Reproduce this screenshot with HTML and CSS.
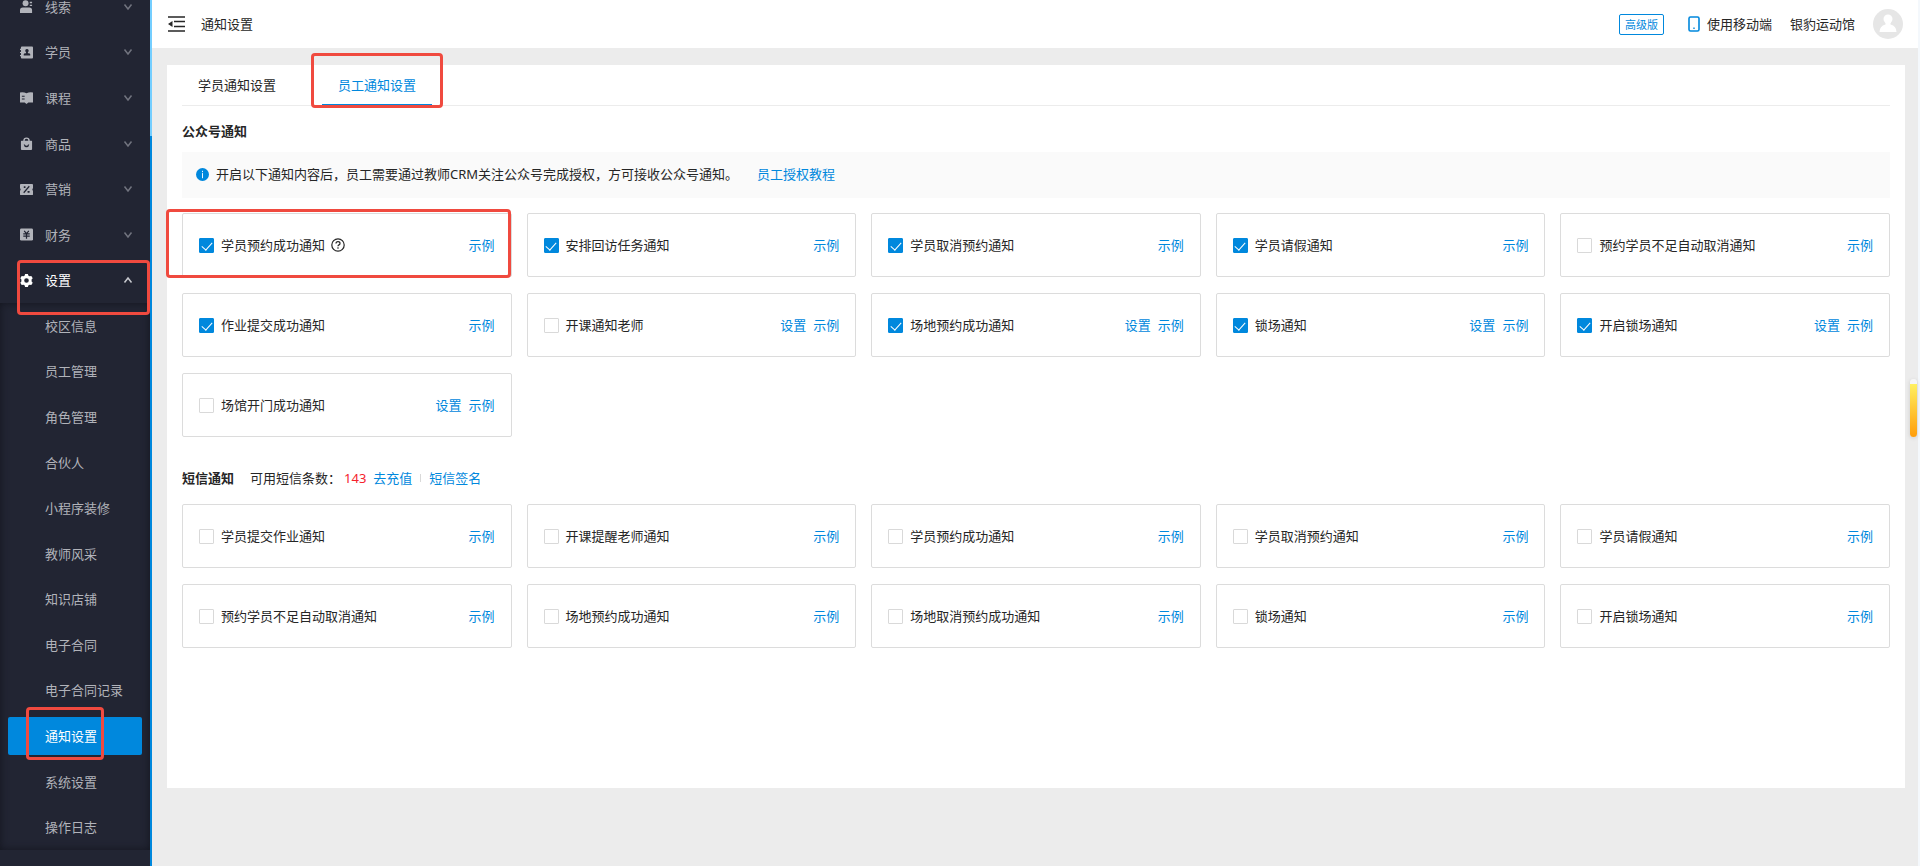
FILE: index.html
```html
<!DOCTYPE html>
<html lang="zh-CN">
<head>
<meta charset="utf-8">
<title>通知设置</title>
<link rel="stylesheet" href="styles.css">
</head>
<body>
<svg class="sprite" aria-hidden="true">
  <symbol id="down" viewBox="0 0 10 10"><path d="M1.5 2.5 5 7l3.500-4.500" fill="none" stroke="currentColor" stroke-width="1.500"/></symbol>
  <symbol id="up" viewBox="0 0 10 10"><path d="M1.500 7.500 5 3l3.500 4.500" fill="none" stroke="currentColor" stroke-width="1.500"/></symbol>
</svg>
<div class="app">
  <aside class="sidebar">
    <nav class="menu">
      <a class="item" href="#"><svg class="icon" viewBox="0 0 14 14"><circle cx="6" cy="3.500" r="3.200"/><path d="M0 14v-3q0-3 3-3h7q3 0 3 3v3zM10.500 2H13v1.500h-2.500zM10.500 5H13v1.500h-2.500z"/></svg><span>线索</span><svg class="arrow"><use href="#down"/></svg></a>
      <a class="item" href="#"><svg class="icon" viewBox="0 0 14 14"><path fill-rule="evenodd" d="M2 .5h11q1 0 1 1v11q0 1-1 1H2q-1 0-1-1V11H0V9.800h1V7.600H0V6.400h1V4.200H0V3h1V1.500q0-1 1-1zM7.500 3.200a1.900 1.900 0 0 0-1 3.500v1H6q-2 0-2 1.300v1.200h7V9q0-1.300-2-1.300h-.5v-1a1.900 1.900 0 0 0-1-3.500z"/></svg><span>学员</span><svg class="arrow"><use href="#down"/></svg></a>
      <a class="item" href="#"><svg class="icon" viewBox="0 0 14 14"><path fill-rule="evenodd" d="M0 1.500q4-.8 7 1 3-1.800 7-1v11H9L7 14l-2-1.500H0zM2 5v1.200h3V5zm0 3v1.200h3V8z"/></svg><span>课程</span><svg class="arrow"><use href="#down"/></svg></a>
      <a class="item" href="#"><svg class="icon" viewBox="0 0 14 14"><path fill-rule="evenodd" d="M1.500 4h2a3.500 3.500 0 0 1 7 0h2q.5 0 .5.500V13q0 1-1 1H2q-1 0-1-1V4.500q0-.5.500-.5zM5 4h4a2 2 0 0 0-4 0zM4 8q.5 3 3 3t3-3H8.700Q8.300 9.500 7 9.500T5.300 8z"/></svg><span>商品</span><svg class="arrow"><use href="#down"/></svg></a>
      <a class="item" href="#"><svg class="icon" viewBox="0 0 14 14"><path d="M1 1h12q1 0 1 1v3.500q-1.500 1.500 0 3V12q0 1-1 1H1q-1 0-1-1V8.500q1.500-1.500 0-3V2q0-1 1-1z"/><path class="cut" d="M10 3.500 4 10.500M4 4.500h2M5 3.500v2M8 9.500h2.500M9.200 8.500v2"/></svg><span>营销</span><svg class="arrow"><use href="#down"/></svg></a>
      <a class="item" href="#"><svg class="icon" viewBox="0 0 14 14"><rect y=".5" width="14" height="13" rx="1.500"/><path class="cut" d="m4.500 3 2.500 3 2.500-3M3.500 6.300h7M3.500 8.800h7M7 6v5.500"/></svg><span>财务</span><svg class="arrow"><use href="#down"/></svg></a>
      <a class="item open" href="#"><svg class="icon" viewBox="0 0 14 14"><path fill-rule="evenodd" d="M5.500 0h3l.6 1.800 1.200.7 1.900-.4 1.500 2.600L12.500 6v2l1.200 1.300-1.500 2.600-1.900-.4-1.200.7-.6 1.800h-3l-.6-1.800-1.200-.7-1.900.4L.3 9.300 1.500 8V6L.3 4.700l1.500-2.600 1.900.4 1.200-.7zM7 4.500a2.500 2.500 0 1 0 0 5 2.500 2.500 0 0 0 0-5z"/></svg><span>设置</span><svg class="arrow"><use href="#up"/></svg><i class="mark mark-menu"></i></a>
      <div class="submenu">
        <a class="sub" href="#">校区信息</a>
        <a class="sub" href="#">员工管理</a>
        <a class="sub" href="#">角色管理</a>
        <a class="sub" href="#">合伙人</a>
        <a class="sub" href="#">小程序装修</a>
        <a class="sub" href="#">教师风采</a>
        <a class="sub" href="#">知识店铺</a>
        <a class="sub" href="#">电子合同</a>
        <a class="sub" href="#">电子合同记录</a>
        <a class="sub" href="#"><span class="current">通知设置</span><i class="mark mark-sub"></i></a>
        <a class="sub" href="#">系统设置</a>
        <a class="sub" href="#">操作日志</a>
      </div>
    </nav>
  </aside>
  <div class="page">
    <header class="topbar">
      <button class="fold" aria-label="收起菜单"><svg viewBox="0 0 17 16"><path d="M0 1h17M6 5.500h11M6 10.500h11M0 15h17" fill="none" stroke="currentColor" stroke-width="1.500"/><path d="M4.500 5v6L0 8z" fill="currentColor"/></svg></button>
      <h1 class="title">通知设置</h1>
      <span class="badge">高级版</span>
      <a class="mobile" href="#"><svg viewBox="0 0 12 16"><rect x="1" y="1" width="10" height="14" rx="1.500" fill="none" stroke="#0088dd" stroke-width="1.600"/><path d="M5.300 11.500h1.400V13H5.300z" fill="#0088dd"/></svg>使用移动端</a>
      <span class="venue">银豹运动馆</span>
      <svg class="avatar" viewBox="0 0 30 30"><circle cx="15" cy="15" r="15" fill="#e6e6e6"/><circle cx="15" cy="10" r="4.500" fill="#fff"/><path d="M12.500 13h5v2.500q6 1.500 6 7.500h-17q0-6 6-7.500z" fill="#fff"/></svg>
    </header>
    <main class="panel">
      <nav class="tabs">
        <a class="tab" href="#">学员通知设置</a>
        <a class="tab selected" href="#">员工通知设置<i class="mark mark-tab"></i></a>
      </nav>
      <h2 class="heading">公众号通知</h2>
      <p class="notice"><svg viewBox="0 0 14 14"><circle cx="7" cy="7" r="7" fill="#0088dd"/><path d="M7 3v1.500M7 5.500V11" stroke="#fff"/></svg><span>开启以下通知内容后，员工需要通过教师CRM关注公众号完成授权，方可接收公众号通知。</span><a href="#">员工授权教程</a></p>
      <section class="cards">
        <div class="card"><label><input type="checkbox" checked>学员预约成功通知</label><svg class="help" viewBox="0 0 14 14"><circle cx="7" cy="7" r="6.200"/><path d="M5 5.600q0-1.900 2-1.900t2 1.700q0 1-1 1.500T7 8.200M7 9.300v1.400"/></svg><span class="links"><a href="#">示例</a></span><i class="mark mark-card"></i></div>
        <div class="card"><label><input type="checkbox" checked>安排回访任务通知</label><span class="links"><a href="#">示例</a></span></div>
        <div class="card"><label><input type="checkbox" checked>学员取消预约通知</label><span class="links"><a href="#">示例</a></span></div>
        <div class="card"><label><input type="checkbox" checked>学员请假通知</label><span class="links"><a href="#">示例</a></span></div>
        <div class="card"><label><input type="checkbox">预约学员不足自动取消通知</label><span class="links"><a href="#">示例</a></span></div>
        <div class="card"><label><input type="checkbox" checked>作业提交成功通知</label><span class="links"><a href="#">示例</a></span></div>
        <div class="card"><label><input type="checkbox">开课通知老师</label><span class="links"><a href="#">设置</a><a href="#">示例</a></span></div>
        <div class="card"><label><input type="checkbox" checked>场地预约成功通知</label><span class="links"><a href="#">设置</a><a href="#">示例</a></span></div>
        <div class="card"><label><input type="checkbox" checked>锁场通知</label><span class="links"><a href="#">设置</a><a href="#">示例</a></span></div>
        <div class="card"><label><input type="checkbox" checked>开启锁场通知</label><span class="links"><a href="#">设置</a><a href="#">示例</a></span></div>
        <div class="card"><label><input type="checkbox">场馆开门成功通知</label><span class="links"><a href="#">设置</a><a href="#">示例</a></span></div>
      </section>
      <div class="sms">
        <h2 class="sms-title">短信通知</h2>
        <span>可用短信条数：</span><span class="count">143</span>
        <a href="#">去充值</a><i class="divider"></i><a href="#">短信签名</a>
      </div>
      <section class="cards">
        <div class="card"><label><input type="checkbox">学员提交作业通知</label><span class="links"><a href="#">示例</a></span></div>
        <div class="card"><label><input type="checkbox">开课提醒老师通知</label><span class="links"><a href="#">示例</a></span></div>
        <div class="card"><label><input type="checkbox">学员预约成功通知</label><span class="links"><a href="#">示例</a></span></div>
        <div class="card"><label><input type="checkbox">学员取消预约通知</label><span class="links"><a href="#">示例</a></span></div>
        <div class="card"><label><input type="checkbox">学员请假通知</label><span class="links"><a href="#">示例</a></span></div>
        <div class="card"><label><input type="checkbox">预约学员不足自动取消通知</label><span class="links"><a href="#">示例</a></span></div>
        <div class="card"><label><input type="checkbox">场地预约成功通知</label><span class="links"><a href="#">示例</a></span></div>
        <div class="card"><label><input type="checkbox">场地取消预约成功通知</label><span class="links"><a href="#">示例</a></span></div>
        <div class="card"><label><input type="checkbox">锁场通知</label><span class="links"><a href="#">示例</a></span></div>
        <div class="card"><label><input type="checkbox">开启锁场通知</label><span class="links"><a href="#">示例</a></span></div>
      </section>
    </main>
  </div>
</div>
<div class="float-bar"></div>
</body>
</html>
```
FILE: styles.css
```css
* { box-sizing: border-box; }
body {
  margin: 0;
  font: 13px/20px "Noto Sans", "Noto Sans CJK SC", sans-serif;
  color: #262626;
  background: #ececec;
}
a { color: #0088dd; text-decoration: none; }
h1, h2, p { margin: 0; font-size: 13px; }
.sprite { display: none; }
.app { display: flex; height: 100vh; overflow: hidden; }

/* sidebar */
.sidebar {
  position: relative;
  flex: none;
  width: 152px;
  background: #222533;
}
.sidebar::after {
  content: "";
  position: absolute;
  top: 0;
  right: 0;
  bottom: 0;
  width: 2px;
  background: linear-gradient(#74ceff 136px, #0088dd 136px);
}
.menu {
  display: flex;
  flex-direction: column;
  height: 100vh;
  margin: -16px 2px 0 0;
  line-height: 14px;
}
.item {
  position: relative;
  flex: 1;
  display: flex;
  align-items: center;
  padding: 0 17px 0 20px;
  color: #b1b3ba;
}
.icon { width: 13px; height: 13px; margin-right: 12px; fill: currentColor; }
.icon .cut { fill: none; stroke: #222533; stroke-width: 1.3; }
.arrow { width: 10px; height: 10px; margin-left: auto; color: #71747f; }
.open { color: #fff; z-index: 1; }
.open .arrow { color: #c8c9cf; }
.submenu {
  flex: 12;
  display: flex;
  flex-direction: column;
  box-shadow: inset 0 0 8px #14161f;
}
.sub {
  position: relative;
  flex: 1;
  display: flex;
  align-items: center;
  padding-left: 45px;
  color: #b1b3ba;
}
.current {
  flex: 1;
  margin: 0 8px 0 -37px;
  padding: 12px 0 12px 37px;
  border-radius: 2px;
  background: #0088dd;
  color: #fff;
}

/* highlight frames */
.mark {
  position: absolute;
  border: 3px solid #f04a3f;
  border-radius: 4px;
  pointer-events: none;
}
.mark-menu { left: 17px; right: 0; top: 3px; bottom: -12px; }
.mark-sub { left: 26px; right: 46px; top: -6px; bottom: -1px; }
.mark-tab { left: -11px; right: -11px; top: -12px; bottom: -4px; }
.mark-card { left: -17px; right: 0; top: -5px; bottom: -2px; }

/* page */
.page { flex: 1; min-width: 0; border-right: 2px solid #f4f8fc; }
.topbar {
  display: flex;
  align-items: center;
  height: 48px;
  padding: 0 15px 0 16px;
  background: #fff;
}
.fold { padding: 0; border: 0; background: none; color: #262626; line-height: 0; }
.fold svg { width: 17px; height: 16px; }
.title { margin: 0 auto 0 16px; font-weight: 400; }
.badge {
  padding: 0 5px;
  border: 1px solid #0088dd;
  border-radius: 2px;
  font-size: 11px;
  line-height: 19px;
  color: #0088dd;
}
.mobile { display: flex; align-items: center; gap: 7px; margin: 0 18px 0 24px; color: #262626; }
.mobile svg { width: 12px; height: 16px; }
.avatar { width: 30px; height: 30px; margin-left: 18px; }

.panel {
  min-height: 723px;
  margin: 17px 13px 0 15px;
  padding: 0 15px 24px;
  background: #fff;
}
.tabs { display: flex; gap: 30px; height: 41px; border-bottom: 1px solid #ececec; }
.tab { position: relative; padding: 10px 16px 0; color: #262626; }
.selected { height: 41px; border-bottom: 2px solid #0088dd; color: #0088dd; }
.heading { margin: 15px 0 11px; font-weight: 600; }
.notice {
  display: flex;
  align-items: center;
  margin-bottom: 15px;
  padding: 12px 14px 14px;
  background: #fafafa;
}
.notice svg { width: 13px; height: 13px; margin-right: 7px; }
.notice a { margin-left: 19px; }

.cards { display: grid; grid-template-columns: repeat(5, 1fr); gap: 16px 15px; }
.card {
  position: relative;
  display: flex;
  align-items: center;
  height: 64px;
  padding: 0 16px;
  border: 1px solid #dcdcdc;
  border-radius: 2px;
}
.card label { display: flex; align-items: center; gap: 7px; }
.card input {
  appearance: none;
  display: flex;
  justify-content: center;
  width: 15px;
  height: 15px;
  margin: 0;
  border: 1px solid #d9d9d9;
  border-radius: 1px;
  background: #fff;
}
.card input:checked { border-color: #0088dd; background: #0088dd; }
.card input:checked::after {
  content: "";
  width: 5px;
  height: 9px;
  margin-top: 1px;
  border: solid #fff;
  border-width: 0 1px 1px 0;
  transform: rotate(42deg);
}
.help { width: 14px; height: 14px; margin-left: 6px; fill: none; stroke: #262626; stroke-width: 1.2; }
.links { display: flex; gap: 7px; margin-left: auto; }

.sms { display: flex; align-items: center; margin: 31px 0 16px; }
.sms-title { margin-right: 16px; font-weight: 600; }
.count { margin: 0 7px 0 3px; color: #f5222d; }
.divider { width: 1px; height: 8px; margin: 0 8px; background: #d9d9d9; }

.float-bar {
  position: fixed;
  right: 3px;
  top: 379px;
  width: 7px;
  height: 58px;
  border-radius: 4px;
  background: linear-gradient(#f5f5f5 5px, #fff060 5px, #ff9d0a);
  box-shadow: 0 1px 4px #0002;
}
```
